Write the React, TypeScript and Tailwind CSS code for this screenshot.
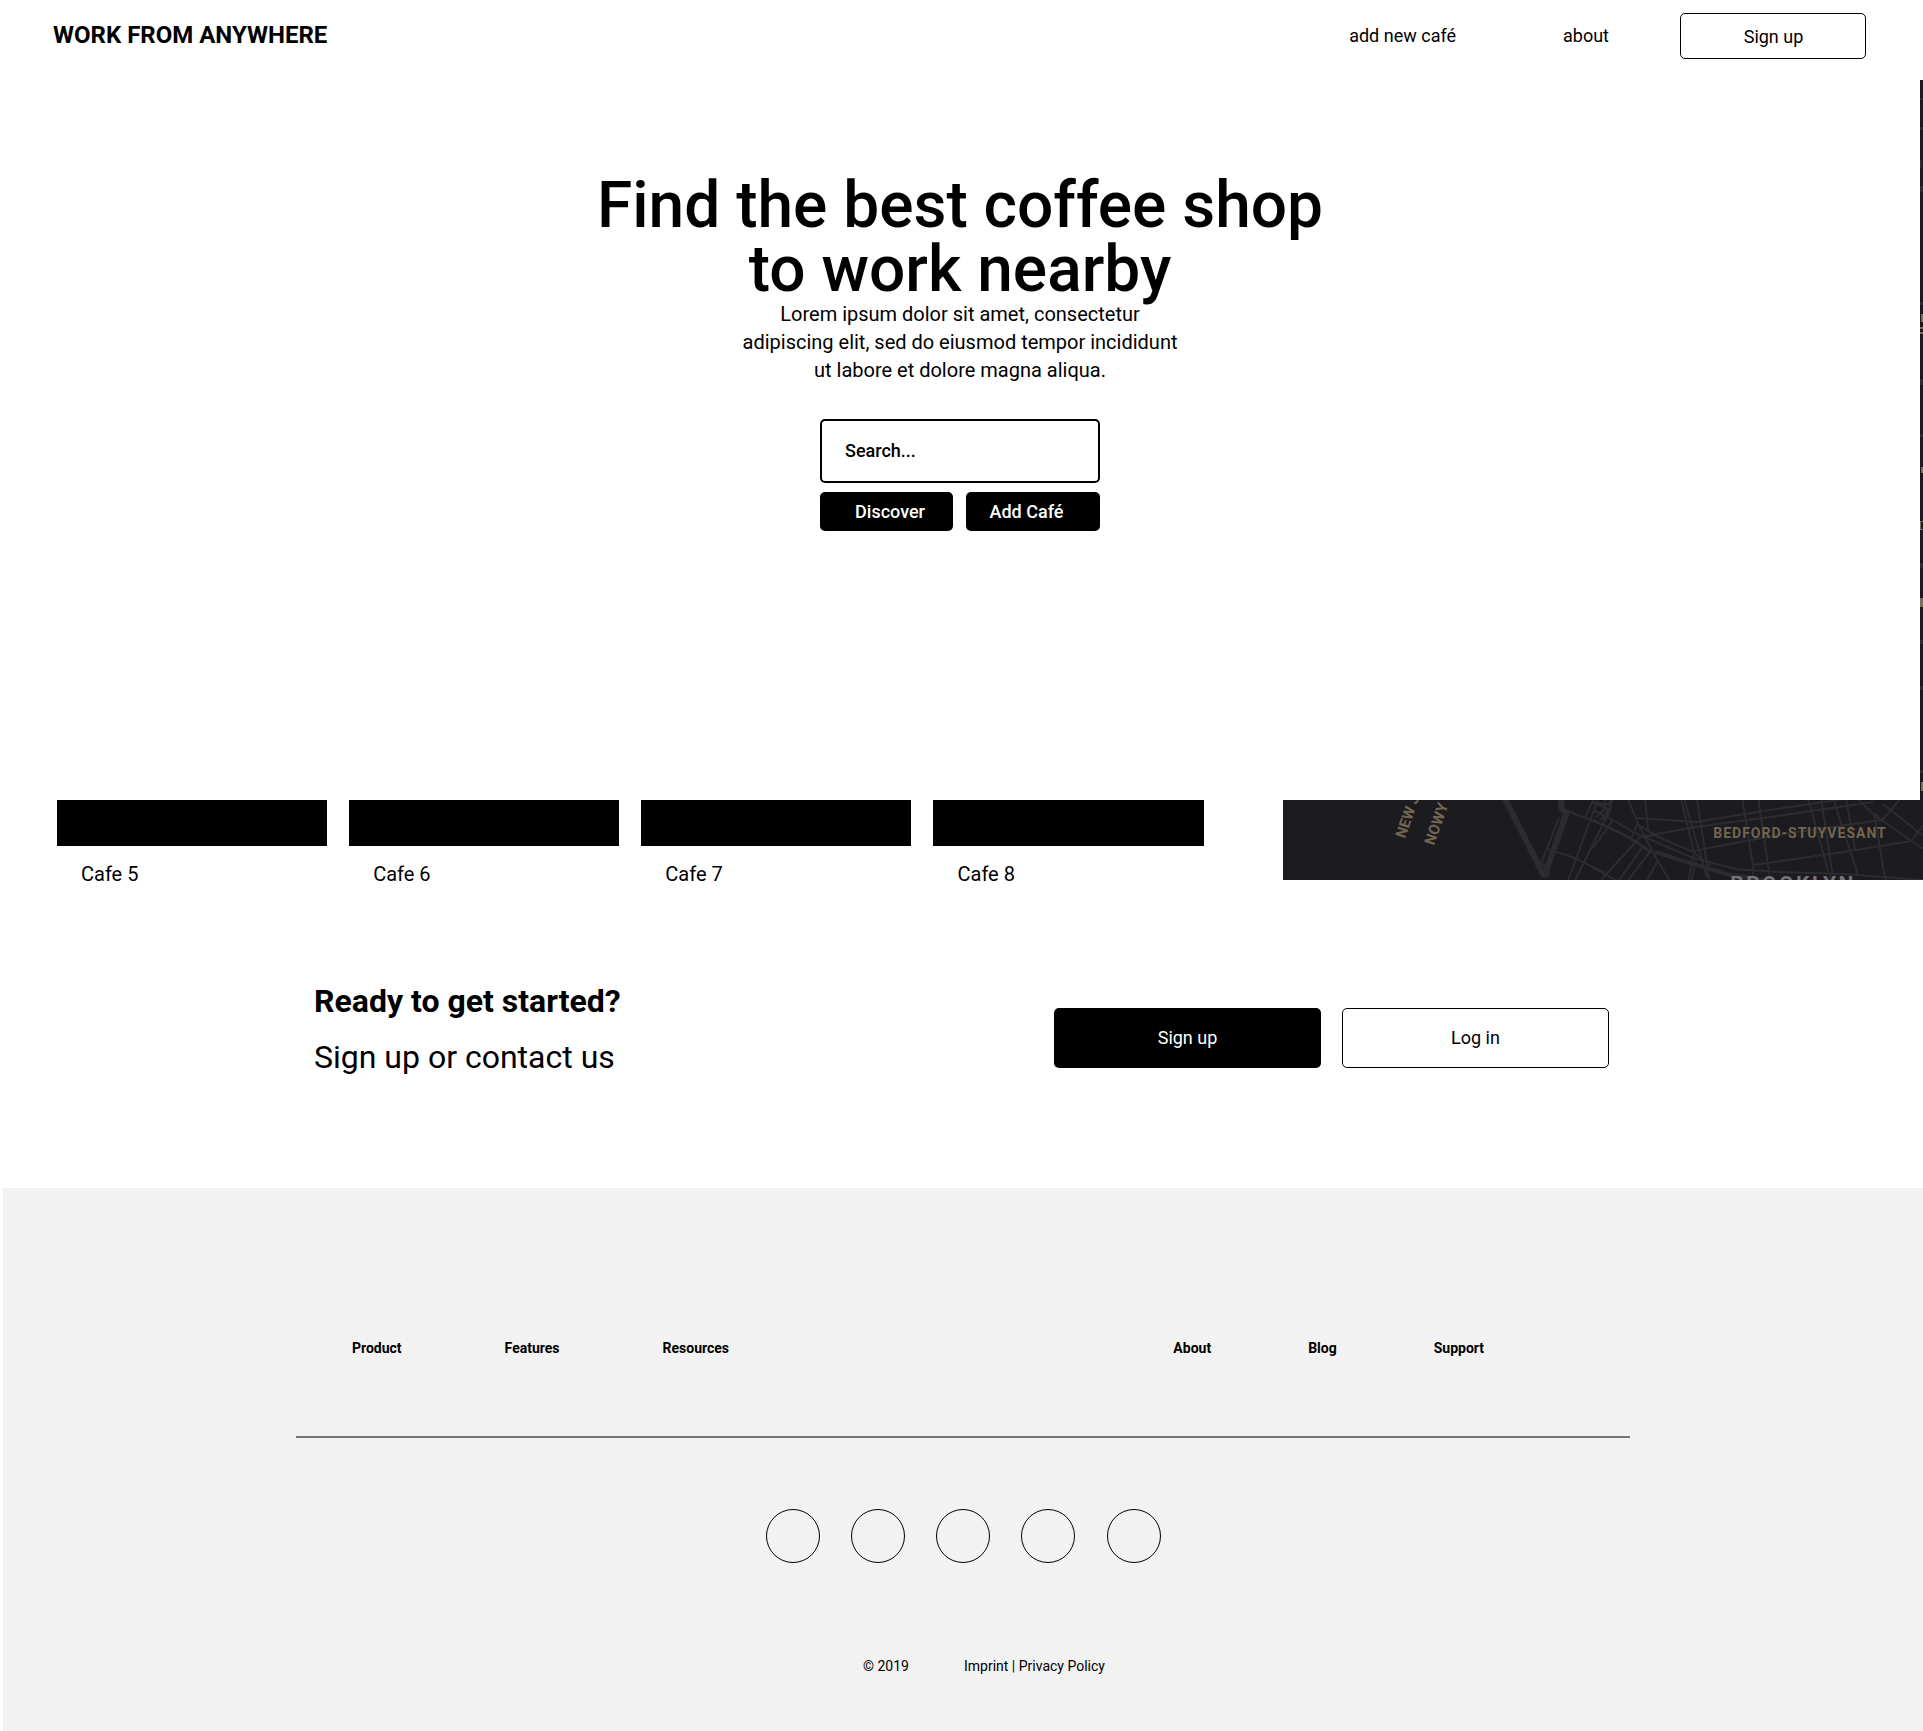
import React from "react";

const cafes = ["Cafe 5", "Cafe 6", "Cafe 7", "Cafe 8"];
const socials = ["Facebook", "Twitter", "Instagram", "YouTube", "LinkedIn"];

function Header() {
  return (
    <header className="mb-2 flex h-[72px] items-center justify-between pl-[53px] pr-[57px]">
      <a href="#" className="pb-[3px] text-2xl font-bold">
        WORK FROM ANYWHERE
      </a>
      <nav className="flex items-center text-lg">
        <a href="#add" className="mr-[107px]">
          add new café
        </a>
        <a href="#about" className="mr-[71px]">
          about
        </a>
        <button className="h-[46px] w-[186px] rounded-[5px] border border-black pt-px pl-px">Sign up</button>
      </nav>
    </header>
  );
}

function MapEdge() {
  return (
    <svg
      className="w-[3px] shrink-0 self-stretch bg-[#171a1e]"
      viewBox="0 0 3 720"
      preserveAspectRatio="none"
      aria-hidden="true"
    >
      <g fill="#2b2e31">
        <rect y="18" width="3" height="2" />
        <rect y="47" width="3" height="3" />
        <rect y="80" width="2" height="8" />
        <rect y="106" width="3" height="6" />
        <rect y="222" width="3" height="3" />
        <rect y="299" width="3" height="6" />
        <rect y="354" width="3" height="3" />
        <rect y="483" width="3" height="5" />
        <rect y="560" width="3" height="4" />
        <rect y="606" width="3" height="4" />
        <rect y="690" width="3" height="3" />
      </g>
      <g fill="#7a705c">
        <rect x="1" y="234" width="2" height="8" />
        <rect y="247" width="3" height="2" />
        <rect y="252" width="3" height="2" />
        <rect x="1" y="387" width="2" height="6" />
        <rect y="441" width="1" height="9" />
        <rect y="441" width="3" height="1" />
        <rect y="449" width="3" height="1" />
        <rect y="518" width="3" height="9" />
        <rect x="1" y="702" width="2" height="9" />
      </g>
    </svg>
  );
}

function Hero() {
  return (
    <section className="flex min-h-[720px]">
      <div className="flex flex-1 flex-col items-center pt-[94px]">
        <h1 className="text-center text-[64px] leading-[64px] font-medium">
          Find the best coffee shop
          <br />
          to work nearby
        </h1>
        <p className="-mt-0.5 max-w-[450px] text-center text-xl leading-7">
          Lorem ipsum dolor sit amet, consectetur adipiscing elit, sed do eiusmod tempor incididunt ut labore et
          dolore magna aliqua.
        </p>
        <form className="mt-[35px] w-[280px] text-lg font-medium" onSubmit={(e) => e.preventDefault()}>
          <input
            type="text"
            aria-label="Search"
            placeholder="Search..."
            className="block h-16 w-full rounded-[5px] border-2 border-black px-[23px] pb-0.5 placeholder:text-black placeholder:opacity-100"
          />
          <div className="mt-[9px] flex justify-between text-white">
            <button className="h-[39px] w-[133px] rounded-[5px] bg-black pl-[7px]">Discover</button>
            <button className="h-[39px] w-[134px] rounded-[5px] bg-black pr-[13px]">Add Café</button>
          </div>
        </form>
      </div>
      <MapEdge />
    </section>
  );
}

function CityMap() {
  return (
    <svg
      className="block h-20 w-[33.3%] shrink-0 bg-[#1c1b20]"
      viewBox="0 0 640 80"
      preserveAspectRatio="xMinYMin slice"
      role="img"
      aria-label="Map of Brooklyn"
      fontFamily="Roboto, sans-serif"
    >
      <g fill="none" stroke="#2c2b30" strokeWidth="2">
        <g strokeWidth="6" strokeLinejoin="round">
          <path d="M221 -3 261 76" />
          <path d="M278 -3V7L283 14 262 74" />
        </g>
        <circle cx="262" cy="73" r="4" fill="#2c2b30" />
        <path d="M276 17 257 66M257 64 266 67M264 49 274 52 294 59 322 73" />
        <path d="M282 10 318 24M315 -1 285 80M325 14 292 80M302 17 310 0M310 10 318 14" />
        <path d="M372 52 410 64 447 75 480 80" strokeWidth="4" />
        <path d="M310 20 345 37 368 52" strokeWidth="3" />
        <path d="M310 10 330 20 352 33 410 58 452 69 495 72 560 74 640 80" />
        <path d="M310 2 325 9 320 20M313 17 322 8V0M317 20 327 10V0M310 3 326 4M329 0 325 14" />
        <path d="M345 -1 355 24 366 45 374 60 386 80" />
        <path d="M362 0 365 31 375 36M354 18 413 22 480 11 560 -1" />
        <path d="M357 37 412 27 480 18 590 2M373 35 362 37" />
        <path d="M354 24 373 36 410 52 428 66M410 51 500 34 598 20M354 24 348 39" />
        <path d="M310 48 330 20M357 37 318 80M310 68 333 80M360 46 336 80M368 50 345 80M375 60 364 80" />
        <path d="M401 0 424 78M414 0 426 80M398 0 411 53 405 80M413 61 408 80" />
        <path d="M459 -1 470 66 469 80M475 -1 487 80" />
        <path d="M470 65 560 52 628 41M525 -1 545 72M538 0 549 72 545 80" />
        <path d="M550 -1 575 76M563 0 572 50M591 14 602 80" />
        <path d="M570 -5 590 14 628 41 640 49M600 4 640 36M616 0 598 21M628 41 640 25M592 13 598 21" />
      </g>
      <g fill="#72664f" fontWeight="700">
        <text transform="translate(122 39) rotate(-71)" fontSize="15">
          NEW J
        </text>
        <text transform="translate(151 46) rotate(-71)" fontSize="15">
          NOWY
        </text>
        <text x="430" y="38" fontSize="14" letterSpacing="1">
          BEDFORD-STUYVESANT
        </text>
      </g>
      <text x="447" y="91" fontSize="21" fontWeight="700" letterSpacing="2.5" fill="#77757c">
        BROOKLYN
      </text>
    </svg>
  );
}

function Listings() {
  return (
    <section className="flex items-start">
      <ul className="grid flex-1 grid-cols-4 gap-[22px] pl-[57px] pr-[79px]">
        {cafes.map((name) => (
          <li key={name}>
            <div className="h-[46px] bg-black" />
            <p className="mt-[14px] pl-6 text-xl leading-7">{name}</p>
          </li>
        ))}
      </ul>
      <CityMap />
    </section>
  );
}

function CallToAction() {
  return (
    <section className="flex items-start justify-between px-[314px] pt-[94px] pb-[112px]">
      <div className="text-[32px] leading-[38px]">
        <h2 className="font-bold">Ready to get started?</h2>
        <p className="mt-[18px]">Sign up or contact us</p>
      </div>
      <div className="mt-[26px] flex gap-[21px] text-lg">
        <button className="h-[60px] w-[267px] rounded-[5px] bg-black text-white">Sign up</button>
        <button className="h-[60px] w-[267px] rounded-[5px] border border-black">Log in</button>
      </div>
    </section>
  );
}

function Footer() {
  return (
    <footer className="ml-[3px] bg-[#f2f2f2] px-[293px] pt-[149px] pb-[54px] text-sm">
      <div className="flex justify-between border-b-2 border-[#757575] pr-[146px] pb-[77px] pl-14 leading-[22px] font-bold">
        <nav className="flex gap-[103px]" aria-label="Product links">
          <a href="#product">Product</a>
          <a href="#features">Features</a>
          <a href="#resources">Resources</a>
        </nav>
        <nav className="flex gap-[97px]" aria-label="Company links">
          <a href="#about">About</a>
          <a href="#blog">Blog</a>
          <a href="#support">Support</a>
        </nav>
      </div>
      <div className="mx-auto mt-[71px] flex w-[395px] justify-between">
        {socials.map((name) => (
          <a key={name} href="#social" aria-label={name} className="size-[54px] rounded-full border border-black" />
        ))}
      </div>
      <div className="mt-[92px] flex justify-center gap-[55px] pl-[42px] leading-[22px]">
        <span>© 2019</span>
        <span>
          <a href="#imprint">Imprint</a> | <a href="#privacy">Privacy Policy</a>
        </span>
      </div>
    </footer>
  );
}

export default function App() {
  return (
    <div className="min-h-screen bg-white font-['Roboto',sans-serif] text-black">
      <Header />
      <main>
        <Hero />
        <Listings />
        <CallToAction />
      </main>
      <Footer />
    </div>
  );
}
